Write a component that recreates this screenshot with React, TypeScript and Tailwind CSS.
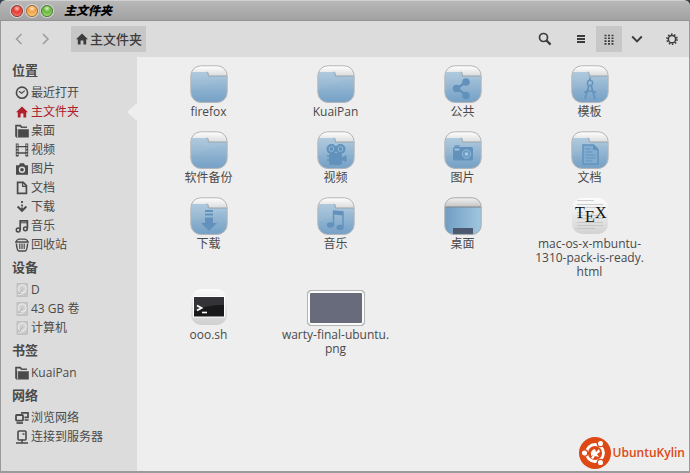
import type { ReactNode } from 'react'

type Place = { label: string; icon: ReactNode; active?: boolean }
type Entry = { name: ReactNode; key: string; icon: ReactNode }

function Glyph({ children }: { children: ReactNode }) {
  return (
    <svg viewBox="0 0 14 14" className="w-3.5 h-3.5 shrink-0" fill="none" stroke="currentColor" strokeWidth="1.5" aria-hidden="true">
      {children}
    </svg>
  )
}

const homeShape = <path d="M7 1.5 1 7.2h1.8V12.5H5.6V8.6h2.8v3.9h2.8V7.2H13Z" fill="currentColor" stroke="none" />

const folderGlyph = (
  <Glyph>
    <path d="M1 12.8V1.6h4.4l1 1.6H12" strokeWidth="1.6" />
    <path d="M3.2 5.2h10.6v8.3H1V4.5Z" fill="currentColor" stroke="none" />
    <path d="M2.6 13V4.4h10.8" stroke="#dcdcdc" strokeWidth="0.8" />
  </Glyph>
)

const diskGlyph = (
  <Glyph>
    <rect x="2" y="0.5" width="10.5" height="13" fill="#c6c6c6" stroke="#bcbcbc" strokeWidth="0.8" />
    <circle cx="7.2" cy="5.8" r="4" fill="#d2d2d2" stroke="#eeeeee" strokeWidth="1" />
    <path d="M7.8 5.5 4 11" stroke="#b0b0b0" strokeWidth="1" />
    <path d="M3 11.5q5 1 8-3" stroke="#e8e8e8" strokeWidth="0.8" />
  </Glyph>
)

const sections: { title: string; places: Place[] }[] = [
  {
    title: '位置',
    places: [
      {
        label: '最近打开',
        icon: (
          <Glyph>
            <circle cx="7" cy="6.7" r="5.6" strokeWidth="1.6" />
            <path d="M4 5.2 6.6 7.3 9.8 4.6" strokeWidth="1.2" />
          </Glyph>
        ),
      },
      { label: '主文件夹', icon: <Glyph>{homeShape}</Glyph>, active: true },
      { label: '桌面', icon: folderGlyph },
      {
        label: '视频',
        icon: (
          <Glyph>
            <path d="M2.2 .5v13M11.8 .5v13" strokeWidth="2.8" />
            <path d="M3 3.6h8M3 10h8" strokeWidth="1.4" />
            <path d="M2.2 1.5v12M11.8 1.5v12" stroke="#dcdcdc" strokeWidth="1.1" strokeDasharray="1.4 1.6" />
          </Glyph>
        ),
      },
      {
        label: '图片',
        icon: (
          <Glyph>
            <path d="M1 3.2h3l1-2h4l1 2h3v9.5H1Z" fill="currentColor" stroke="none" />
            <circle cx="7" cy="7.7" r="2.5" stroke="#dcdcdc" strokeWidth="1.4" />
          </Glyph>
        ),
      },
      {
        label: '文档',
        icon: (
          <Glyph>
            <path d="M2.6 1.4h5.6l3.2 3.2v7.8H2.6Z" strokeWidth="1.7" />
            <path d="M7.6 1.5v3.8h3.8" strokeWidth="1.2" />
          </Glyph>
        ),
      },
      {
        label: '下载',
        icon: (
          <Glyph>
            <path d="M2.6 6.5 7 10.8l4.4-4.3" strokeWidth="1.9" />
            <path d="M7 1v2M7 4.6v2M7 7.5v3" strokeWidth="1.8" />
          </Glyph>
        ),
      },
      {
        label: '音乐',
        icon: (
          <Glyph>
            <path d="M5.2 11V1.8h7.2v7.7" strokeWidth="1.7" />
            <path d="M5 3.8h7" strokeWidth="1" />
            <circle cx="3.2" cy="11" r="1.9" />
            <circle cx="10.4" cy="9.8" r="1.9" />
          </Glyph>
        ),
      },
      {
        label: '回收站',
        icon: (
          <Glyph>
            <path d="M.8 4Q1.6 1.8 4 1.2h6q2.400.6 3.200 2.800Z" strokeWidth="1.3" />
            <path d="M1.400 5.500Q2 13 4 13h6q2 0 2.600-7.500" strokeWidth="1.500" />
            <path d="M4.800 5.500v5.600M7 5.500v5.600M9.200 5.500v5.600" strokeWidth="1.200" />
          </Glyph>
        ),
      },
    ],
  },
  {
    title: '设备',
    places: [
      { label: 'D', icon: diskGlyph },
      { label: '43 GB 卷', icon: diskGlyph },
      { label: '计算机', icon: diskGlyph },
    ],
  },
  { title: '书签', places: [{ label: 'KuaiPan', icon: folderGlyph }] },
  {
    title: '网络',
    places: [
      {
        label: '浏览网络',
        icon: (
          <Glyph>
            <rect x="1" y="4" width="7" height="5.6" rx="0.8" strokeWidth="1.8" />
            <path d="M1.5 12h6.500" strokeWidth="1.700" />
            <path d="M6 1.800h7v4.600H9.500M9.600 9h4" strokeWidth="1.700" />
          </Glyph>
        ),
      },
      {
        label: '连接到服务器',
        icon: (
          <Glyph>
            <rect x="3" y="1" width="8" height="9" rx="1" strokeWidth="1.6" />
            <path d="M1 13h12M7 9.5v3M7.5 4h2" strokeWidth="1.5" />
          </Glyph>
        ),
      },
    ],
  },
]

function Folder({ children }: { children?: ReactNode }) {
  return (
    <svg viewBox="0 0 38 38" className="w-[38px] h-[38px]" fill="none" aria-hidden="true">
      <defs>
        <linearGradient id="folder-body" x1="0" y1="0" x2="0" y2="1">
          <stop offset="0" stopColor="#adc8dc" />
          <stop offset="1" stopColor="#739fc5" />
        </linearGradient>
        <linearGradient id="folder-paper" x1="0" y1="0" x2="0" y2="1">
          <stop offset="0" stopColor="#ffffff" />
          <stop offset="0.3" stopColor="#d8d8d8" />
        </linearGradient>
        <clipPath id="folder-clip">
          <rect x="1" y="1" width="36" height="36.5" rx="10" />
        </clipPath>
      </defs>
      <rect x="0.8" y="0.8" width="36.4" height="36.8" rx="10" fill="url(#folder-paper)" />
      <g clipPath="url(#folder-clip)">
        <path d="M0 7h16.5q1.8 0 1.8 1.8V11H38v27H0Z" fill="url(#folder-body)" />
        <path d="M16.5 7q1.8 0 1.8 1.800V11H37" stroke="#8d9ba6" strokeWidth="0.8" />
        <path d="M0 25Q12 22 20 18T38 14v-3H18.3V9Q18 7 16.5 7H0Z" fill="#ffffff" opacity="0.04" />
      </g>
      <rect x="0.8" y="0.8" width="36.4" height="36.6" rx="10" stroke="#b2b5b8" strokeWidth="1" />
      {children}
    </svg>
  )
}

const ink = '#6292bc'

const entries: Entry[] = [
  { key: 'firefox', name: 'firefox', icon: <Folder /> },
  { key: 'kuaipan', name: 'KuaiPan', icon: <Folder /> },
  {
    key: 'public',
    name: '公共',
    icon: (
      <Folder>
        <path d="M22 17 13 23.5l9 6.5" stroke={ink} strokeWidth="2.6" />
        <circle cx="22" cy="17" r="3.8" fill={ink} />
        <circle cx="12.5" cy="23.5" r="3.8" fill={ink} />
        <circle cx="22" cy="30.5" r="3.8" fill={ink} />
      </Folder>
    ),
  },
  {
    key: 'templates',
    name: '模板',
    icon: (
      <Folder>
        <circle cx="19" cy="18" r="2.6" stroke={ink} strokeWidth="1.4" />
        <path d="M19 12.5v3M17.8 20.5 14 34M20.2 20.5 24 34M13 27.5q6-3 12 0" stroke={ink} strokeWidth="1.6" />
      </Folder>
    ),
  },
  { key: 'backup', name: '软件备份', icon: <Folder /> },
  {
    key: 'videos',
    name: '视频',
    icon: (
      <Folder>
        <rect x="12" y="22" width="13" height="12" rx="2" fill={ink} />
        <path d="m24 27 5.5-3v7L24 29Z" fill={ink} />
        <circle cx="14.5" cy="18" r="5" fill={ink} />
        <circle cx="23.5" cy="18" r="5" fill={ink} />
        <circle cx="14.5" cy="18" r="2.4" stroke="#94bad8" />
        <circle cx="23.5" cy="18" r="2.4" stroke="#94bad8" />
        <path d="M10 25h3M10 29h3" stroke={ink} strokeWidth="1.5" />
      </Folder>
    ),
  },
  {
    key: 'pictures',
    name: '图片',
    icon: (
      <Folder>
        <rect x="9" y="16" width="20" height="13.5" rx="1.5" fill={ink} />
        <path d="M10.5 15h5" stroke={ink} strokeWidth="1.4" />
        <rect x="10.5" y="17.5" width="5" height="2" fill="#9dc0dc" />
        <circle cx="22.5" cy="23" r="4.2" fill="#6c9bc3" stroke="#94bad8" />
        <circle cx="22.5" cy="23" r="1.8" fill="#a9c9e2" />
      </Folder>
    ),
  },
  {
    key: 'documents',
    name: '文档',
    icon: (
      <Folder>
        <path d="M12 14h10.5l4.5 4.5V33H12Z" fill="#83add0" stroke={ink} strokeWidth="1.5" />
        <path d="M22 14v5h5Z" fill={ink} />
        <path d="M14.5 18h5M14.5 21h7M14.5 24h10M14.5 27h10M14.5 30h7" stroke={ink} strokeWidth="1.2" />
      </Folder>
    ),
  },
  {
    key: 'downloads',
    name: '下载',
    icon: (
      <Folder>
        <path d="M15 14h8M15 17.5h8" stroke={ink} strokeWidth="2" />
        <path d="M15 20.5h8V26h4l-8 8-8-8h4Z" fill={ink} />
      </Folder>
    ),
  },
  {
    key: 'music',
    name: '音乐',
    icon: (
      <Folder>
        <path d="M16.500 28V14l9.500 1V30" stroke={ink} strokeWidth="1.4" />
        <path d="M16.500 14l9.500 1v3.500l-9.500-1Z" fill={ink} />
        <ellipse cx="13.5" cy="28" rx="3.600" ry="2.800" fill={ink} />
        <ellipse cx="23" cy="30.500" rx="3.600" ry="2.800" fill={ink} />
      </Folder>
    ),
  },
  {
    key: 'desktop',
    name: '桌面',
    icon: (
      <svg viewBox="0 0 38 38" className="w-[38px] h-[38px]" fill="none" aria-hidden="true">
        <defs>
          <linearGradient id="desk-top" x1="0" y1="0" x2="0" y2="1">
            <stop offset="0" stopColor="#f6f6f6" />
            <stop offset="0.26" stopColor="#c4c4c4" />
          </linearGradient>
          <linearGradient id="desk-body" x1="0" y1="0" x2="1" y2="0">
            <stop offset="0" stopColor="#6f9cc3" />
            <stop offset="1" stopColor="#a2c8e0" />
          </linearGradient>
          <clipPath id="desk-clip">
            <rect x="1" y="1" width="36" height="36.5" rx="9" />
          </clipPath>
        </defs>
        <g clipPath="url(#desk-clip)">
          <path d="M0 0h38v38H0Z" fill="url(#desk-top)" />
          <path d="M0 10h38v28H0Z" fill="url(#desk-body)" />
          <path d="M0 10h38" stroke="#7e8488" />
          <path d="M9 31h20v7H9Z" fill="#4c5870" />
        </g>
        <rect x="0.8" y="0.8" width="36.4" height="36.6" rx="9" stroke="#a4a8ab" />
      </svg>
    ),
  },
  {
    key: 'html',
    name: (
      <>
        mac-os-x-mbuntu-
        <br />
        1310-pack-is-ready.
        <br />
        html
      </>
    ),
    icon: (
      <svg viewBox="0 0 38 38" className="w-[38px] h-[38px]" fill="none" aria-hidden="true">
        <defs>
          <linearGradient id="tex-bg" x1="0" y1="0" x2="0" y2="1">
            <stop offset="0" stopColor="#fdfdfd" />
            <stop offset="1" stopColor="#d2d2d2" />
          </linearGradient>
        </defs>
        <rect x="1" y="1" width="36" height="36" rx="10" fill="url(#tex-bg)" />
        <path d="M6 3.5h17M6 7.5h26M6 10.5h26M6 15.5h6M6 18.5h26M6 21.5h26M6 25.5h26M6 28.5h26M6 31.5h18" stroke="#c2c2c2" strokeWidth="0.8" />
        <g fill="#111111" fontSize="16" fontFamily="Liberation Serif, serif">
          <text x="4" y="21">T</text>
          <text x="14" y="25">E</text>
          <text x="24" y="21">X</text>
        </g>
      </svg>
    ),
  },
  {
    key: 'shell',
    name: 'ooo.sh',
    icon: (
      <svg viewBox="0 0 38 38" className="w-[38px] h-[38px]" fill="none" aria-hidden="true">
        <defs>
          <linearGradient id="term-bg" x1="0" y1="0" x2="0" y2="1">
            <stop offset="0" stopColor="#fbfbfb" />
            <stop offset="1" stopColor="#cfcfcf" />
          </linearGradient>
        </defs>
        <rect x="1" y="1" width="36" height="36" rx="10" fill="url(#term-bg)" />
        <rect x="3.5" y="8.5" width="31" height="20.5" fill="#19191b" stroke="#ffffff" />
        <path d="M4 9h30v8q-15-1-30 6Z" fill="#343438" />
        <path d="m7 17.5 4.500 2.500L7 22.500" stroke="#ffffff" strokeWidth="1.8" />
        <path d="M12 24.500h5" stroke="#ffffff" strokeWidth="1.6" />
      </svg>
    ),
  },
  {
    key: 'wallpaper',
    name: (
      <>
        warty-final-ubuntu.
        <br />
        png
      </>
    ),
    icon: <span className="block w-[58px] h-9 rounded-sm border border-[#b4b4b4] bg-[#686b7b] shadow-[inset_0_0_0_2px_#fafafa]" />,
  },
]

function TitleBar() {
  return (
    <header className="h-[21px] flex items-center gap-[3px] pl-[11px] rounded-t-md border-t border-[#d0d0d0] border-b border-b-[#949494] bg-gradient-to-b from-[#b8b8b8] to-[#a2a2a2]">
      <button aria-label="关闭" className="w-3 h-3 rounded-full border border-[#8d3a35] bg-[radial-gradient(circle_at_50%_25%,#ffc0b8_0%,#e5382f_40%,#ff8c80_100%)] shadow-[0_0_0_1px_#d8d8d8]" />
      <button aria-label="最小化" className="w-3 h-3 rounded-full border border-[#a06a35] bg-[radial-gradient(circle_at_50%_25%,#ffe6bc_0%,#f0a048_40%,#ffe48a_100%)] shadow-[0_0_0_1px_#d8d8d8]" />
      <button aria-label="最大化" className="w-3 h-3 rounded-full border border-[#477a2c] bg-[radial-gradient(circle_at_50%_25%,#d8f4bc_0%,#66b53c_40%,#b4ec86_100%)] shadow-[0_0_0_1px_#d8d8d8]" />
      <h1 className="ml-2 text-[12px] leading-4 font-black italic text-black">主文件夹</h1>
    </header>
  )
}

function Toolbar() {
  return (
    <nav className="h-9 flex items-center pl-[5px] pr-1 text-[#3c3c3c] bg-[#dcdcdc]">
      <button aria-label="后退" className="w-[26px] h-[26px] flex items-center justify-center text-[#9b9b9b]">
        <svg viewBox="0 0 14 14" className="w-3.5 h-3.5" fill="none" stroke="currentColor" strokeWidth="1.5">
          <path d="M9.5 2 4.5 7l5 5" />
        </svg>
      </button>
      <button aria-label="前进" className="w-[26px] h-[26px] flex items-center justify-center text-[#9b9b9b]">
        <svg viewBox="0 0 14 14" className="w-3.5 h-3.5" fill="none" stroke="currentColor" strokeWidth="1.5">
          <path d="m5 2 5 5-5 5" />
        </svg>
      </button>
      <button className="ml-[13px] h-[26px] flex items-center gap-px px-1 bg-[#c7c7c7] text-[13px] leading-5 font-medium">
        <Glyph>{homeShape}</Glyph>
        主文件夹
      </button>
      <button aria-label="搜索" className="ml-auto w-[26px] h-[26px] flex items-center justify-center">
        <svg viewBox="0 0 14 14" className="w-3.5 h-3.5" fill="none" stroke="currentColor">
          <circle cx="5.5" cy="5.5" r="4" strokeWidth="1.7" />
          <path d="m8.400 8.400 4.200 4.200" strokeWidth="2.2" />
        </svg>
      </button>
      <button aria-label="列表视图" className="ml-2.5 w-[26px] h-[26px] flex items-center justify-center">
        <svg viewBox="0 0 14 14" className="w-3.5 h-3.5" stroke="currentColor" strokeWidth="2">
          <path d="M3 4h8M3 7h8M3 10h8" />
        </svg>
      </button>
      <button aria-label="图标视图" aria-pressed="true" className="ml-0.5 w-[26px] h-[26px] flex items-center justify-center bg-[#c7c7c7]">
        <svg viewBox="0 0 14 14" className="w-3.5 h-3.5" stroke="currentColor" strokeWidth="1.6" strokeDasharray="2 1.500">
          <path d="M2.500 3.500h9M2.500 6.300h9M2.500 9.100h9M2.500 11.900h9" />
        </svg>
      </button>
      <button aria-label="视图选项" className="ml-0.5 w-[26px] h-[26px] flex items-center justify-center">
        <svg viewBox="0 0 14 14" className="w-3.5 h-3.5" fill="none" stroke="currentColor" strokeWidth="1.9">
          <path d="M2.200 4.500 7 9.500l4.800-5" />
        </svg>
      </button>
      <button aria-label="设置" className="ml-[9px] w-[26px] h-[26px] flex items-center justify-center">
        <svg viewBox="0 0 14 14" className="w-3.5 h-3.5" fill="none" stroke="currentColor">
          <circle cx="7" cy="7.2" r="3.6" strokeWidth="1.5" />
          <circle cx="7" cy="7.2" r="5" strokeWidth="1.7" strokeDasharray="1.5 1.64" />
        </svg>
      </button>
    </nav>
  )
}

function Sidebar() {
  return (
    <aside className="w-34 shrink-0 bg-[#dcdcdc] text-[#4a4a4a]">
      {sections.map((section) => (
        <section key={section.title}>
          <h2 className="h-[26px] flex items-center pl-[11px] text-[13px] leading-5 font-bold">{section.title}</h2>
          <ul>
            {section.places.map((place) => (
              <li key={place.label}>
                <a
                  href="#"
                  className={
                    place.active
                      ? 'h-[19px] flex items-center gap-0.5 pl-3.5 text-[12px] leading-4 text-[#b0202a]'
                      : 'h-[19px] flex items-center gap-0.5 pl-3.5 text-[12px] leading-4'
                  }
                >
                  {place.icon}
                  {place.label}
                  {place.active && (
                    <svg viewBox="0 0 10 18" className="ml-auto w-2.5 h-[18px]" aria-hidden="true">
                      <path d="M10 0v18L0 9Z" fill="#eeeeee" />
                    </svg>
                  )}
                </a>
              </li>
            ))}
          </ul>
        </section>
      ))}
    </aside>
  )
}

function Brand() {
  return (
    <div className="mt-auto flex items-center justify-end gap-0.5 pr-1 pb-0.5">
      <svg viewBox="0 0 32 32" className="w-8 h-8" fill="none" aria-hidden="true">
        <circle cx="16" cy="16" r="16" fill="#dd4814" />
        <circle cx="16" cy="16" r="8.5" stroke="#ffffff" strokeWidth="2.8" />
        <g fill="#ffffff" stroke="#dd4814" strokeWidth="1.3">
          <circle cx="5.5" cy="16" r="3.2" />
          <circle cx="21.5" cy="6.5" r="3.2" />
          <circle cx="21.5" cy="25.5" r="3.2" />
        </g>
        <path d="M12 19q-1-6 4-7l1 3 3-3 1 3-3 2 2 3-4-1-2 3-2-1 2-3Z" fill="#ffffff" />
      </svg>
      <span className="text-[12px] leading-4 font-semibold text-[#dd4814]">UbuntuKylin</span>
    </div>
  )
}

export default function App() {
  return (
    <div className="min-h-screen flex flex-col bg-[#34404c] font-['Open_Sans','Noto_Sans_CJK_SC',sans-serif]">
      <TitleBar />
      <div className="flex-1 flex flex-col border-x border-b-2 border-[#9a9a9a]">
        <Toolbar />
        <div className="flex-1 flex">
          <Sidebar />
          <main className="flex-1 flex flex-col pt-2 bg-[#eeeeee] text-[#4a4a4a]">
            <ul className="px-2 grid grid-cols-[repeat(auto-fill,127px)] gap-y-[9px]">
              {entries.map((entry) => (
                <li key={entry.key}>
                  <a href="#" className="flex flex-col items-center gap-0.5 text-center">
                    <span className="h-[38px] flex items-end">{entry.icon}</span>
                    <span className="min-h-[17px] text-[12px] leading-[14px]">{entry.name}</span>
                  </a>
                </li>
              ))}
            </ul>
            <Brand />
          </main>
        </div>
      </div>
    </div>
  )
}
